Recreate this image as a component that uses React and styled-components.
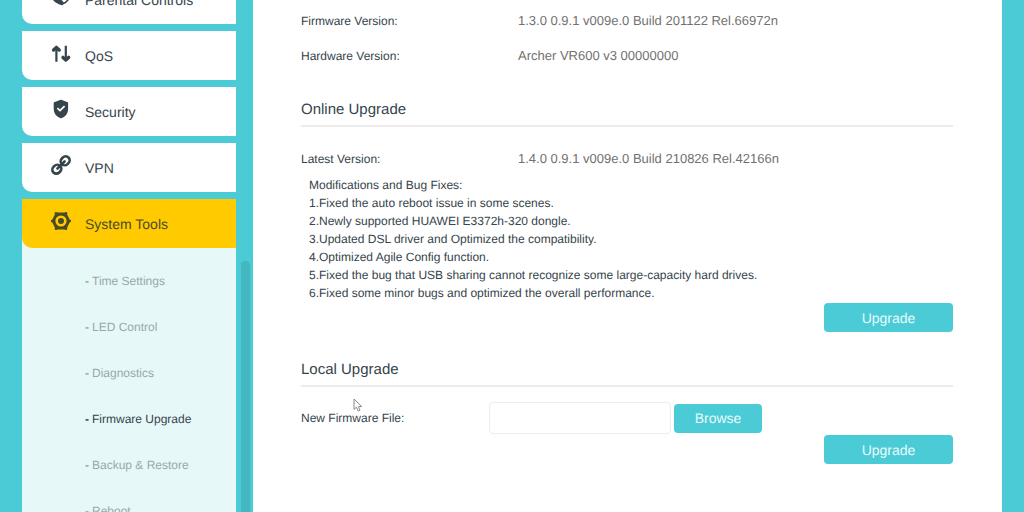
import React, { useState } from "react";
import styled, { createGlobalStyle } from "styled-components";

const releaseNotes = [
  "Modifications and Bug Fixes:",
  "1.Fixed the auto reboot issue in some scenes.",
  "2.Newly supported HUAWEI E3372h-320 dongle.",
  "3.Updated DSL driver and Optimized the compatibility.",
  "4.Optimized Agile Config function.",
  "5.Fixed the bug that USB sharing cannot recognize some large-capacity hard drives.",
  "6.Fixed some minor bugs and optimized the overall performance.",
];

const systemTools = [
  "Time Settings",
  "LED Control",
  "Diagnostics",
  "Firmware Upgrade",
  "Backup & Restore",
  "Reboot",
];

const ParentalIcon = () => (
  <Icon viewBox="0 0 20 20">
    <path d="M10 1C14 3 19 4 19 9C18 13 14 16 11 17.4C6 16 2 13 1 9C1 4 6 3 10 1Z" fill="none" stroke="currentColor" strokeWidth="1.6" />
    <path d="M1 7L7.4 9L13 15.8L11 17.6C6 16.4 2 13 1 9Z" fill="currentColor" />
  </Icon>
);

const QosIcon = () => (
  <Icon viewBox="0 0 20 20">
    <path d="M5.4 18.8V5M14.8 2.8V15" fill="none" stroke="currentColor" strokeWidth="2.2" />
    <path d="M2.6 7L5.4 4.4L8.2 7M12 14.4L14.8 17L17.6 14.4" fill="none" stroke="currentColor" strokeWidth="3.4" strokeLinecap="round" strokeLinejoin="round" />
  </Icon>
);

const SecurityIcon = () => (
  <Icon viewBox="0 0 20 20">
    <path d="M10 1.4L16.4 3.8V10C16.4 14.4 14 17 10 18.6C6 17 3.4 14.4 3.4 10V3.8Z" fill="currentColor" stroke="currentColor" strokeWidth="1.4" strokeLinejoin="round" />
    <path d="M6.4 9.2L9 11.6L13.6 7.2" fill="none" stroke="#fff" strokeWidth="1.8" />
  </Icon>
);

const VpnIcon = () => (
  <Icon viewBox="0 0 20 20">
    <g fill="none" stroke="currentColor" strokeWidth="2.6" transform="rotate(-45 10 10)">
      <rect x="-0.6" y="6" width="9.4" height="8" rx="4" />
      <rect x="11.2" y="6" width="9.4" height="8" rx="4" />
      <path d="M5 10H15" strokeLinecap="round" />
    </g>
  </Icon>
);

const ToolsIcon = () => (
  <Icon viewBox="0 0 20 20">
    <g fill="currentColor">
      <path
        fillRule="evenodd"
        d="M4.8 1.6H15.2L19.4 10L15.2 18.4H4.8L0.6 10ZM10 4.4A5.6 5.6 0 1 0 10 15.6A5.6 5.6 0 1 0 10 4.4Z"
      />
      <circle cx="5" cy="2.2" r="1.3" />
      <circle cx="15" cy="2.2" r="1.3" />
      <circle cx="18.8" cy="10" r="1.3" />
      <circle cx="15" cy="17.8" r="1.3" />
      <circle cx="5" cy="17.8" r="1.3" />
      <circle cx="1.2" cy="10" r="1.3" />
      <circle cx="10" cy="10" r="3" />
    </g>
  </Icon>
);

const menu = [
  { name: "Parental Controls", icon: ParentalIcon },
  { name: "QoS", icon: QosIcon },
  { name: "Security", icon: SecurityIcon },
  { name: "VPN", icon: VpnIcon },
  { name: "System Tools", icon: ToolsIcon, active: true },
];

export default function App() {
  const [page, setPage] = useState("Firmware Upgrade");
  const [file, setFile] = useState("");

  return (
    <Page>
      <GlobalStyle />
      <Sidebar>
        <Nav>
          {menu.map(({ name, icon: MenuIcon, active }) => (
            <TabSlot key={name} $active={active}>
              <Tab type="button" $active={active}>
                <MenuIcon />
                {name}
              </Tab>
            </TabSlot>
          ))}
          <SubMenu>
            {systemTools.map((name) => (
              <li key={name}>
                <SubLink
                  href="#"
                  $active={name === page}
                  onClick={(e) => {
                    e.preventDefault();
                    setPage(name);
                  }}
                >
                  {name}
                </SubLink>
              </li>
            ))}
          </SubMenu>
        </Nav>
        <ScrollThumb />
      </Sidebar>

      <Content>
        <Row>
          <Label as="span">Firmware Version:</Label>
          <Value>1.3.0 0.9.1 v009e.0 Build 201122 Rel.66972n</Value>
        </Row>
        <Row>
          <Label as="span">Hardware Version:</Label>
          <Value>Archer VR600 v3 00000000</Value>
        </Row>

        <Section>
          <Title>Online Upgrade</Title>
          <Row>
            <Label as="span">Latest Version:</Label>
            <Value>1.4.0 0.9.1 v009e.0 Build 210826 Rel.42166n</Value>
          </Row>
          <Notes>
            {releaseNotes.map((line) => (
              <li key={line}>{line}</li>
            ))}
          </Notes>
          <Actions>
            <Button type="button" $wide>
              Upgrade
            </Button>
          </Actions>
        </Section>

        <Section>
          <Title>Local Upgrade</Title>
          <FileRow>
            <Label htmlFor="firmware-file">New Firmware File:</Label>
            <FileInput
              id="firmware-file"
              type="text"
              value={file}
              onChange={(e) => setFile(e.target.value)}
            />
            <Button type="button">Browse</Button>
          </FileRow>
          <Actions>
            <Button type="button" $wide>
              Upgrade
            </Button>
          </Actions>
        </Section>
      </Content>

      <Pointer viewBox="0 0 10 14">
        <path d="M1 1V11.4L3.4 9.2L5.2 13L7 12.2L5.4 8.6H8.8Z" fill="#fff" stroke="#8a8a8a" />
      </Pointer>
    </Page>
  );
}

// Styled Components
const GlobalStyle = createGlobalStyle`
  * {
    box-sizing: border-box;
  }
  body {
    margin: 0;
    overflow: hidden;
    background-color: #4acbd6;
    color: #36444b;
    font-family: "Liberation Sans", Arial, sans-serif;
    font-size: 12px;
    text-rendering: geometricPrecision;
  }
  button,
  input {
    font-family: inherit;
    text-rendering: inherit;
  }
`;

const Page = styled.div`
  display: flex;
  height: 100vh;
  padding-right: 22px;
  overflow: hidden;
`;

const Sidebar = styled.aside`
  display: flex;
  flex: 0 0 253px;
  gap: 5px;
  padding: 0 3px 0 22px;
`;

/* the list is scrolled part of the way down */
const Nav = styled.nav`
  flex: 1;
  margin-top: -25px;
`;

const TabSlot = styled.div`
  margin-bottom: ${({ $active }) => ($active ? "0" : "7px")};
  background-color: ${({ $active }) => ($active ? "#e7f8f9" : "transparent")};
`;

const Tab = styled.button`
  display: flex;
  align-items: center;
  gap: 14px;
  width: 100%;
  height: 49px;
  padding: 0 0 0 29px;
  border: none;
  border-radius: 0 0 0 10px;
  background-color: ${({ $active }) => ($active ? "#ffcb00" : "#fff")};
  color: ${({ $active }) => ($active ? "#4a4a26" : "#36444b")};
  font-size: 14px;
  cursor: pointer;
`;

const Icon = styled.svg`
  width: 20px;
  height: 20px;
  margin-bottom: 6px;
  overflow: visible;
`;

const SubMenu = styled.ul`
  margin: 0;
  padding: 10px 0 0;
  background-color: #e7f8f9;
  list-style: none;
`;

const SubLink = styled.a`
  display: block;
  padding-left: 63px;
  color: ${({ $active }) => ($active ? "#36444b" : "#98a8ab")};
  line-height: 46px;
  text-decoration: none;

  &::before {
    content: "-";
    margin-right: 3px;
    font-weight: bold;
  }
`;

const ScrollThumb = styled.div`
  width: 9px;
  margin-top: 261px;
  border-radius: 4px 4px 0 0;
  background-color: #44b7c0;
`;

const Content = styled.main`
  flex: 1;
  padding: 3px 49px 0 48px;
  background-color: #fff;
`;

const Row = styled.div`
  display: flex;
  align-items: center;
  height: 35px;
`;

const Label = styled.label`
  flex: 0 0 217px;
`;

const Value = styled.span`
  color: #717171;
  font-size: 13px;
`;

const Section = styled.section`
  padding-top: 26px;

  & + & {
    padding-top: 27px;
  }
`;

const Title = styled.h2`
  margin: 0 0 14px;
  padding-bottom: 4px;
  border-bottom: 2px solid #ececec;
  font-size: 15px;
  font-weight: normal;
  line-height: 22px;
`;

const Notes = styled.ul`
  margin: 0;
  padding: 0 0 0 8px;
  line-height: 18px;
  list-style: none;
`;

const Actions = styled.div`
  display: flex;
  justify-content: flex-end;
  padding-top: 1px;
`;

const Button = styled.button`
  width: ${({ $wide }) => ($wide ? "129px" : "88px")};
  height: 29px;
  padding: 0;
  border: none;
  border-radius: 4px;
  background-color: #4acbd6;
  color: #e9fbfc;
  font-size: 14px;
  cursor: pointer;
`;

const FileRow = styled.div`
  display: flex;
  align-items: center;
  gap: 3px;
  padding-top: 1px;

  ${Label} {
    flex-basis: 185px;
  }
`;

const FileInput = styled.input`
  width: 182px;
  height: 32px;
  padding: 0 8px;
  border: 1px solid #ededed;
  border-radius: 4px;
  outline: none;
`;

const Pointer = styled.svg`
  position: absolute;
  top: 398px;
  left: 353px;
  width: 10px;
  height: 14px;
  pointer-events: none;
`;
